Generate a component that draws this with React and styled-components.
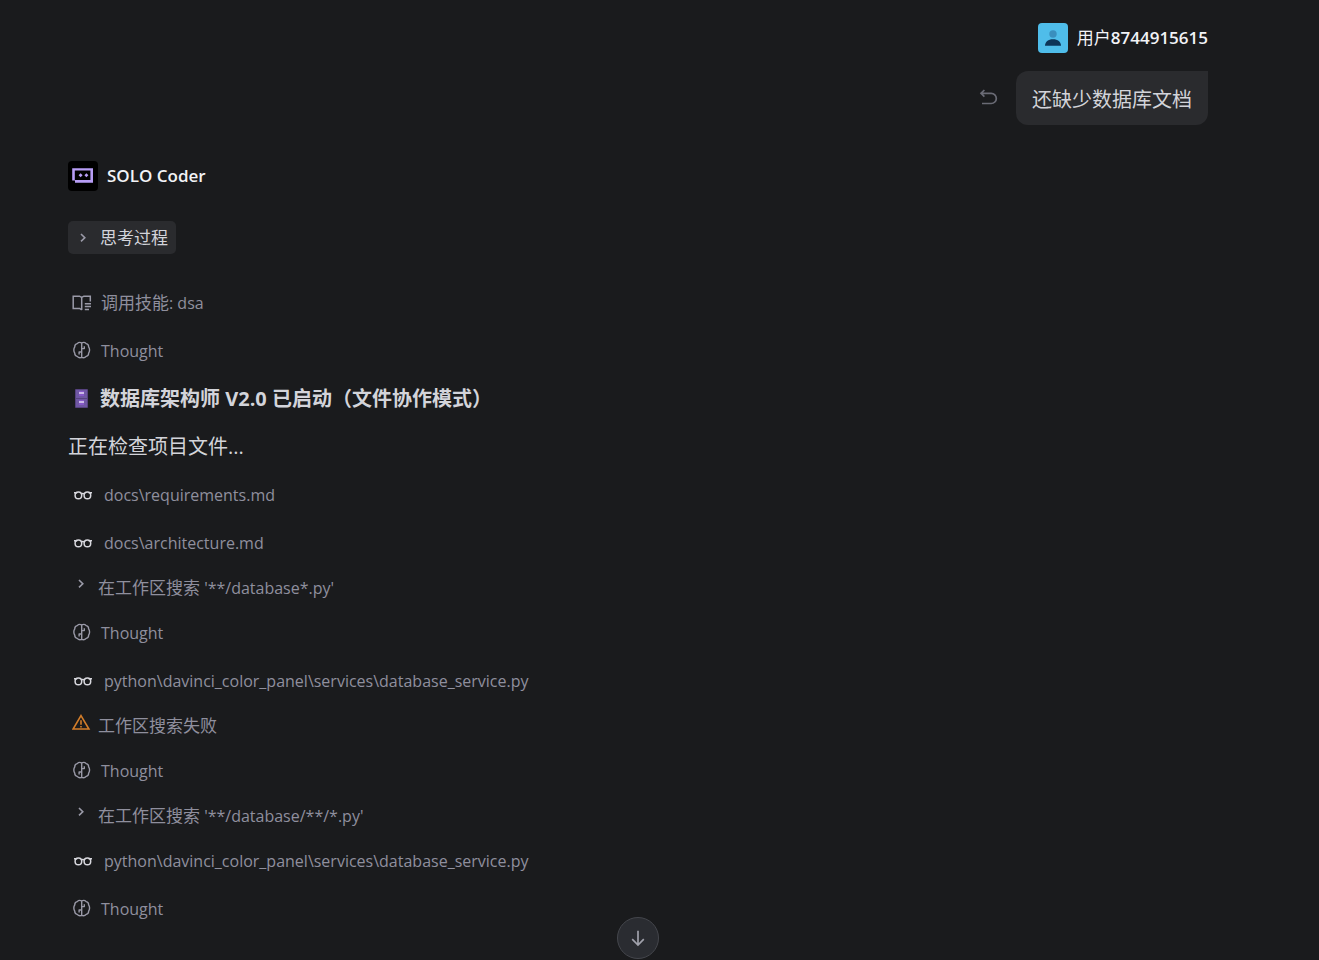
import React from 'react';
import styled, { createGlobalStyle } from 'styled-components';

const color = {
  BG: '#1a1b1d',
  SURFACE: '#2a2b2e',
  WHITE: '#f2f3f7',
  TEXT: '#d3d4da',
  MUTED: '#8f8f9d',
  ICON: '#9a9aa8',
  ORANGE: '#d27d2a',
};

const GlobalStyle = createGlobalStyle`
  * {
    box-sizing: border-box;
  }
  body {
    margin: 0;
    background-color: ${color.BG};
    color: ${color.TEXT};
    font-family: 'Open Sans', 'Noto Sans CJK SC', sans-serif;
    font-size: 16px;
  }
`;

const Page = styled.main`
  min-height: 100vh;
  padding: 23px 111px 32px 68px;
  position: relative;
`;

const UserMessage = styled.section`
  display: flex;
  flex-direction: column;
  align-items: flex-end;
  gap: 18px;
`;

const Author = styled.header`
  height: 30px;
  display: flex;
  align-items: center;
  gap: 9px;
`;

const Avatar = styled.span`
  width: 30px;
  height: 30px;
  display: flex;
  align-items: center;
  justify-content: center;
  border-radius: 4px;
  background-color: ${({ $bg }) => $bg};
`;

const Name = styled.span`
  font-size: 17px;
  line-height: 24px;
  font-weight: 600;
  color: ${color.WHITE};
`;

const NamePrefix = styled.span`
  font-weight: 400;
`;

const BubbleRow = styled.div`
  display: flex;
  align-items: center;
  gap: 17px;
`;

const Bubble = styled.p`
  margin: 0;
  padding: 14px 16px 10px;
  border-radius: 12px 0 12px 12px;
  background-color: ${color.SURFACE};
  font-size: 20px;
  line-height: 30px;
`;

const PlainButton = styled.button`
  padding: 0;
  border: 0;
  display: flex;
  background: none;
  cursor: pointer;
`;

const AgentMessage = styled.section`
  margin-top: 36px;
`;

const ThinkingButton = styled.button`
  height: 33px;
  margin: 30px 0 33px;
  padding: 0 8px;
  display: flex;
  align-items: center;
  gap: 10px;
  border: 0;
  border-radius: 5px;
  background-color: ${color.SURFACE};
  color: ${color.TEXT};
  font: inherit;
  font-size: 17px;
  line-height: 24px;
  cursor: pointer;
`;

const Steps = styled.div`
  display: flex;
  flex-direction: column;
  gap: 16px;
`;

const Step = styled.div`
  min-height: ${({ $compact }) => ($compact ? '26px' : '32px')};
  padding-left: 4px;
  display: flex;
  align-items: center;
  gap: ${({ $gap }) => $gap || '9px'};
  color: ${color.MUTED};
  font-size: 16px;
  line-height: 24px;
`;

const StepIcon = styled.span`
  display: flex;
  align-self: ${({ $raised }) => ($raised ? 'flex-start' : 'center')};
  padding: ${({ $inset }) => ($inset ? '2px' : '0')};
`;

const Cjk = styled.span`
  font-size: 17px;
`;

const Title = styled.h2`
  min-height: 32px;
  margin: 0;
  padding-left: 7px;
  display: flex;
  align-items: center;
  gap: 12px;
  font-size: 20px;
  line-height: 30px;
  font-weight: 700;
`;

const Paragraph = styled.p`
  margin: 0;
  font-size: 20px;
  line-height: 32px;
`;

const ScrollTrack = styled.div`
  position: absolute;
  left: 68px;
  right: 111px;
  bottom: 1px;
  display: flex;
  justify-content: center;
`;

const ScrollButton = styled.button`
  width: 42px;
  height: 42px;
  padding: 0;
  display: flex;
  align-items: center;
  justify-content: center;
  border: 1px solid #44464c;
  border-radius: 50%;
  background-color: #2a2c31;
  cursor: pointer;
`;

const UserIcon = () => (
  <svg width="30" height="30" viewBox="0 0 30 30">
    <circle cx="15" cy="11" r="3.7" fill="#3a8fbe" />
    <path d="M7 22.8c0-4 3.2-6.6 8-6.6s8 2.6 8 6.6z" fill="#0d3558" />
  </svg>
);

const BotIcon = () => (
  <svg width="30" height="30" viewBox="0 0 30 30" fill="#b79df5">
    <path
      fillRule="evenodd"
      d="M4.2 7.2H25v14.6H7V19.4H4.2zM6.8 9.5v9.6h15.6V9.5z"
    />
    <path d="M12.6 12.3l2 2-2 2-2-2zM18.4 12.3l2 2-2 2-2-2z" />
  </svg>
);

const UndoIcon = () => (
  <svg
    width="20"
    height="20"
    viewBox="0 0 20 20"
    fill="none"
    stroke="#6a6b75"
    strokeWidth="1.7"
  >
    <path d="M5.4 2L2 5.3L5.4 8.6M2.2 5.3h10a4.9 4.9 0 0 1 0 10.2H3" />
  </svg>
);

const ChevronIcon = () => (
  <svg
    width="14"
    height="14"
    viewBox="0 0 14 14"
    fill="none"
    stroke={color.ICON}
    strokeWidth="1.6"
  >
    <path d="M5 3L8.8 6.7L5 10.4" />
  </svg>
);

const BookIcon = () => (
  <svg
    width="20"
    height="20"
    viewBox="0 0 20 20"
    fill="none"
    stroke={color.ICON}
    strokeWidth="1.5"
  >
    <path d="M9.7 17l-2-1.6H1.2V3.2h6.3l2.2 1.3 2.2-1.3h6.4v5.2M9.7 4.5V17M12.8 10.7h6.2M12.8 13.6h6.2M12.8 16.5h4.2" />
  </svg>
);

const BrainIcon = () => (
  <svg
    width="20"
    height="20"
    viewBox="0 1 20 20"
    fill="none"
    stroke={color.ICON}
    strokeWidth="1.4"
    strokeLinejoin="round"
  >
    <path d="M9.7 2.9C8.2 2.1 6.3 2.4 5.2 3.6 3.6 4 2.7 5.4 2.8 6.9 1.5 8.5 1.5 11.5 2.8 13.1 2.7 14.6 3.6 16 5.2 16.4 6.3 17.6 8.2 17.9 9.7 17.3 11.2 17.9 13.1 17.6 14.2 16.4 15.8 16 16.7 14.6 16.6 13.1 17.9 11.5 17.9 8.5 16.6 6.9 16.7 5.4 15.8 4 14.2 3.6 13.1 2.4 11.2 2.1 9.7 2.9zM9.7 2.9v14.4M9.7 8.6h2.6V6.2M9.7 12H7.1v2.4" />
  </svg>
);

const GlassesIcon = () => (
  <svg
    width="20"
    height="20"
    viewBox="-1 0 20 20"
    fill="none"
    stroke="#d8d8de"
    strokeWidth="1.5"
  >
    <circle cx="5.4" cy="10.4" r="3.3" />
    <circle cx="14.4" cy="10.4" r="3.3" />
    <path d="M1 7.7h3.2M15.6 7.7h3.4M8.2 9c.7-.8 2.8-.8 3.4 0" />
  </svg>
);

const WarningIcon = () => (
  <svg
    width="20"
    height="20"
    viewBox="0 0 20 20"
    fill="none"
    stroke={color.ORANGE}
    strokeWidth="1.6"
  >
    <path d="M9 2.6L16.9 16H1.1zM9 7.2v4.6M9 12.9v1.6" />
  </svg>
);

const CabinetIcon = () => (
  <svg width="13" height="20" viewBox="0 0 13 20">
    <rect width="13" height="19" rx="1" fill="#56427f" />
    <rect x="1" y="1" width="11" height="8" fill="#6f57a3" />
    <rect x="1" y="10" width="11" height="8" fill="#6f57a3" />
    <rect x="4" y="2" width="5" height="5" fill="#8658c8" />
    <rect x="4" y="11" width="5" height="5" fill="#8658c8" />
    <rect x="4" y="3" width="5" height="2" fill="#cbb9e8" />
    <rect x="4" y="12" width="5" height="2" fill="#cbb9e8" />
  </svg>
);

const ArrowDownIcon = () => (
  <svg
    width="20"
    height="20"
    viewBox="0 0 20 20"
    fill="none"
    stroke="#a0a1ab"
    strokeWidth="1.7"
  >
    <path d="M10 2.8v14M4.2 11.2L10 17l5.8-5.8" />
  </svg>
);

const Thought = () => (
  <Step>
    <StepIcon>
      <BrainIcon />
    </StepIcon>
    Thought
  </Step>
);

const FileRead = ({ path }) => (
  <Step $gap="12px">
    <StepIcon>
      <GlassesIcon />
    </StepIcon>
    {path}
  </Step>
);

const Search = ({ pattern }) => (
  <Step $compact $gap="8px">
    <StepIcon $raised $inset>
      <ChevronIcon />
    </StepIcon>
    <span>
      <Cjk>在工作区搜索</Cjk> {pattern}
    </span>
  </Step>
);

const SearchFailed = () => (
  <Step $compact $gap="6px">
    <StepIcon $raised>
      <WarningIcon />
    </StepIcon>
    <Cjk>工作区搜索失败</Cjk>
  </Step>
);

const App = () => {
  return (
    <>
      <GlobalStyle />
      <Page>
        <UserMessage>
          <Author>
            <Avatar $bg="#4fbdea">
              <UserIcon />
            </Avatar>
            <Name>
              <NamePrefix>用户</NamePrefix>8744915615
            </Name>
          </Author>
          <BubbleRow>
            <PlainButton aria-label="撤销">
              <UndoIcon />
            </PlainButton>
            <Bubble>还缺少数据库文档</Bubble>
          </BubbleRow>
        </UserMessage>

        <AgentMessage>
          <Author>
            <Avatar $bg="#000">
              <BotIcon />
            </Avatar>
            <Name>SOLO Coder</Name>
          </Author>
          <ThinkingButton>
            <ChevronIcon />
            思考过程
          </ThinkingButton>
          <Steps>
            <Step>
              <StepIcon>
                <BookIcon />
              </StepIcon>
              <span>
                <Cjk>调用技能</Cjk>: dsa
              </span>
            </Step>
            <Thought />
            <Title>
              <CabinetIcon />
              数据库架构师 V2.0 已启动（文件协作模式）
            </Title>
            <Paragraph>正在检查项目文件...</Paragraph>
            <FileRead path="docs\requirements.md" />
            <FileRead path="docs\architecture.md" />
            <Search pattern="'**/database*.py'" />
            <Thought />
            <FileRead path="python\davinci_color_panel\services\database_service.py" />
            <SearchFailed />
            <Thought />
            <Search pattern="'**/database/**/*.py'" />
            <FileRead path="python\davinci_color_panel\services\database_service.py" />
            <Thought />
          </Steps>
        </AgentMessage>

        <ScrollTrack>
          <ScrollButton aria-label="滚动到底部">
            <ArrowDownIcon />
          </ScrollButton>
        </ScrollTrack>
      </Page>
    </>
  );
};

export default App;
